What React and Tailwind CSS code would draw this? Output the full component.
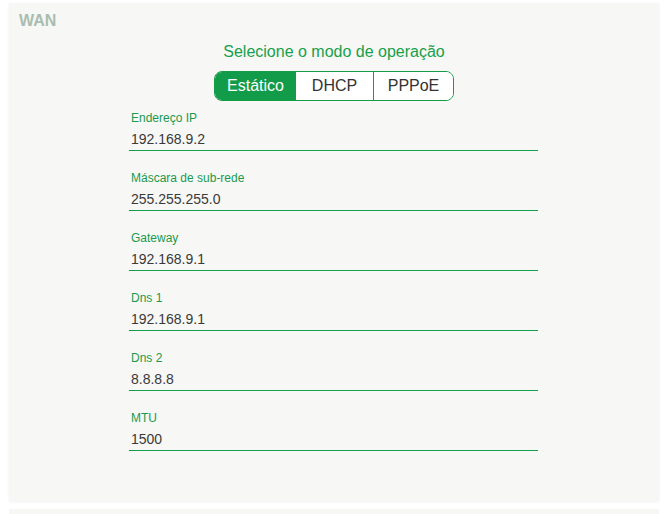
import React from "react";

const fields = [
  ["Endereço IP", "192.168.9.2"],
  ["Máscara de sub-rede", "255.255.255.0"],
  ["Gateway", "192.168.9.1"],
  ["Dns 1", "192.168.9.1"],
  ["Dns 2", "8.8.8.8"],
  ["MTU", "1500"],
];

export default function App() {
  return (
    <div
      className="bg-white w-[672px] h-[514px] overflow-hidden pt-[3px] pl-[9px]"
      style={{ fontFamily: '"Liberation Sans", Arial, sans-serif' }}
    >
      <div className="w-[650px] h-[498px] bg-[#f7f7f5] shadow-[0_1px_3px_rgba(0,0,0,0.06)] pt-[8px] px-[10px]">
        <div className="text-[16px] leading-[20px] font-bold text-[#a9bdb0]">WAN</div>
        <div className="mt-[10px] text-center text-[16px] leading-[22px] text-[#16a04c]">
          Selecione o modo de operação
        </div>
        <div className="mt-[8px] flex justify-center">
          <div className="flex h-[30px] border border-[#149c48] rounded-[8px] overflow-hidden text-[16px]">
            <div className="w-[81px] flex items-center justify-center bg-[#129b48] text-white">Estático</div>
            <div className="w-[78px] flex items-center justify-center bg-white text-[#333] border-r border-[#149c48]">DHCP</div>
            <div className="w-[79px] flex items-center justify-center bg-white text-[#333]">PPPoE</div>
          </div>
        </div>
        <div className="mt-[9px] w-[409px] ml-[110px] flex flex-col gap-[19px]">
          {fields.map(([label, value]) => (
            <div key={label} className="flex flex-col">
              <div className="pl-[2px] text-[12px] leading-[16px] text-[#1a9a4e]">{label}</div>
              <div className="pl-[2px] mt-[3px] text-[14px] leading-[20px] text-[#3a3a3a]">{value}</div>
              <div className="mt-[1px] h-[1px] bg-[#12a14a]" />
            </div>
          ))}
        </div>
      </div>
      <div className="mt-[8px] w-[650px] h-[20px] bg-[#f7f7f5]" />
    </div>
  );
}
